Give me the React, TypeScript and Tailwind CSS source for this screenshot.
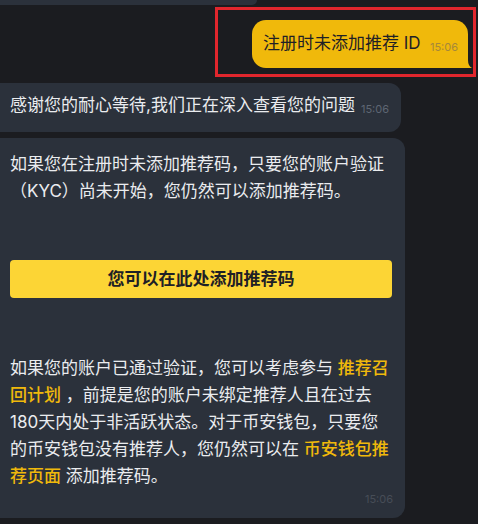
export default function App() {
  return (
    <div
      className="h-[524px] w-[478px] overflow-hidden bg-[#1b1c20] text-[17px] leading-[27px] text-[#eaecef]"
      style={{ fontFamily: 'Inter, "Noto Sans CJK SC", sans-serif' }}
    >
      {/* tail of the previous bubble */}
      <div className="h-[5px] w-[257px] rounded-br-[10px] bg-[#2b313b]" />

      {/* highlighted outgoing message */}
      <div className="ml-[215px] mt-[2px] flex h-[70px] w-[261px] items-start justify-end border-[3px] border-[#e1262d] pr-[5px] pt-[10px]">
        <div className="relative flex h-[48px] w-[216px] items-end justify-between rounded-[14px] rounded-br-[3px] bg-[#f0b90b] pb-[11px] pl-[11px] pr-[10px] pt-[9px]">
          <span className="text-[#1e2026]">注册时未添加推荐 ID</span>
          <span className="mb-[1px] text-[11px] leading-[18px] text-[#a5883a]">15:06</span>
          <svg className="absolute -right-[4px] bottom-0" width="8" height="8" viewBox="0 0 8 8">
            <path d="M0 0 L4 0 Q4 6 8 8 L0 8 Z" fill="#f0b90b" />
          </svg>
        </div>
      </div>

      {/* incoming reply */}
      <div className="mt-[6px] flex">
        <div className="flex h-[49px] items-end gap-[6px] rounded-r-[12px] bg-[#2b313b] pb-[13px] pl-[10px] pr-[12px] pt-[9px]">
          <span>感谢您的耐心等待,我们正在深入查看您的问题</span>
          <span className="mb-[1px] text-[11px] leading-[18px] text-[#5e6673]">15:06</span>
        </div>
      </div>

      {/* long answer */}
      <div className="mt-[6px] w-[405px] rounded-r-[12px] bg-[#2b313b] pb-[10px] pl-[10px] pr-[12px] pt-[13px]">
        <p className="w-[383px]">
          如果您在注册时未添加推荐码，只要您的账户验证（KYC）尚未开始，您仍然可以添加推荐码。
        </p>
        <button className="mt-[55px] flex h-[38px] w-[382px] items-center justify-center rounded-[4px] bg-[#fcd535] font-bold text-[#1e2026]">
          您可以在此处添加推荐码
        </button>
        <p className="mt-[57px] w-[383px]">
          如果您的账户已通过验证，您可以考虑参与 <span className="font-medium text-[#f0b90b]">推荐召回计划</span> ，前提是您的账户未绑定推荐人且在过去180天内处于非活跃状态。对于币安钱包，只要您的币安钱包没有推荐人，您仍然可以在 <span className="font-medium text-[#f0b90b]">币安钱包推荐页面</span> 添加推荐码。
        </p>
        <div className="text-right text-[11px] leading-[18px] text-[#474d57]">15:06</div>
      </div>
    </div>
  );
}
